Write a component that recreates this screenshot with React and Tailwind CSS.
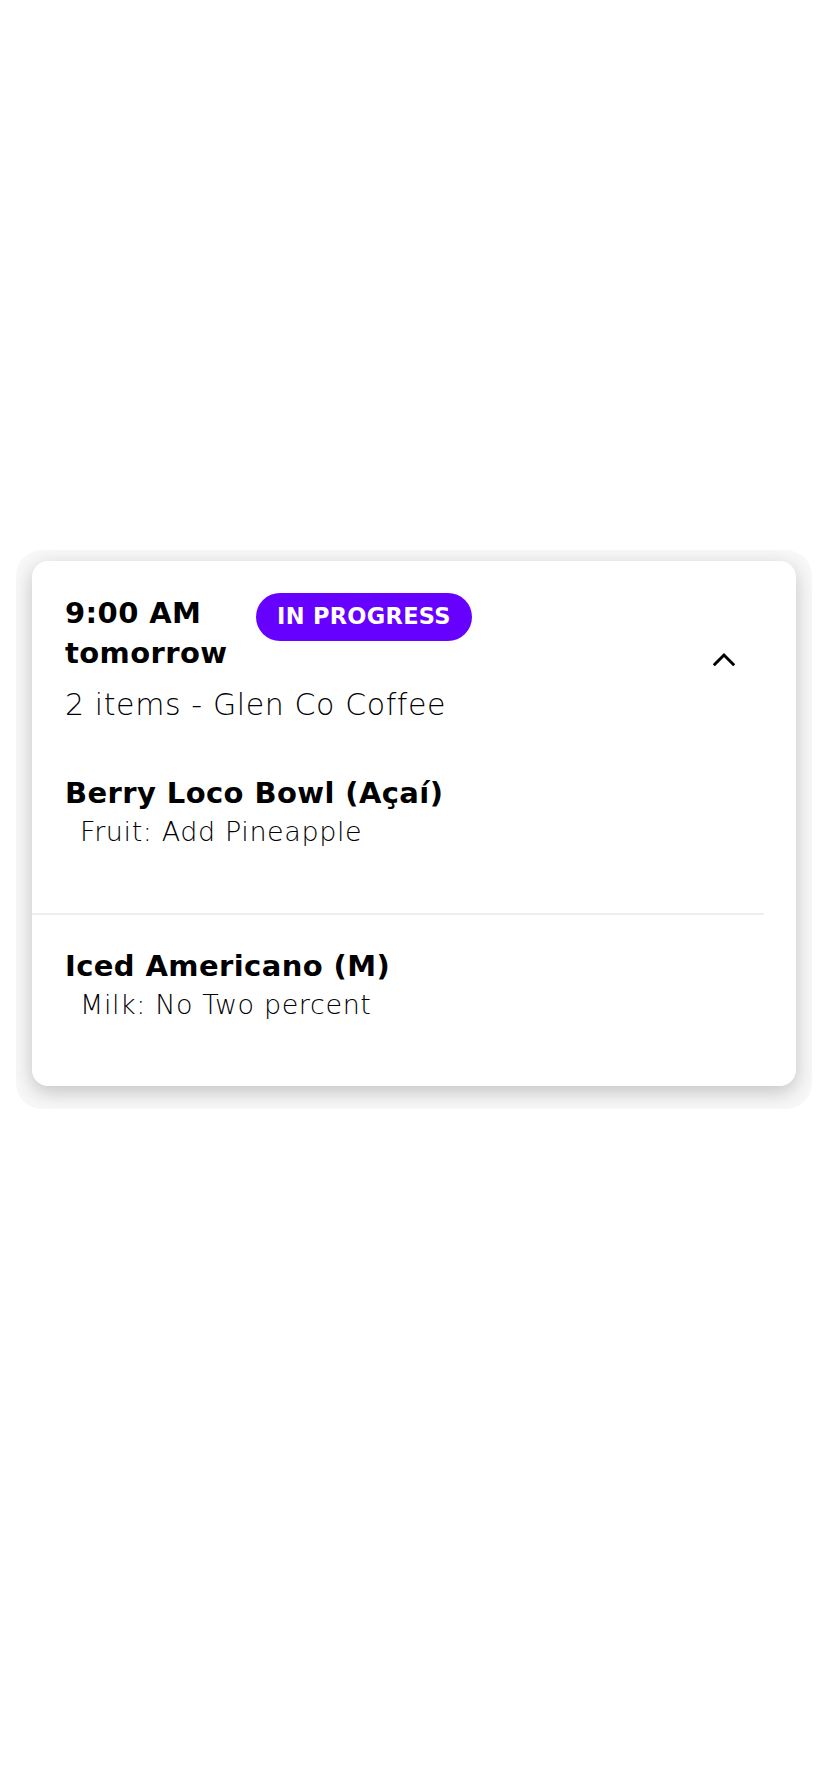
import { useState } from "react";

const ORDER = {
  time: "9:00 AM",
  day: "tomorrow",
  status: "IN PROGRESS",
  summary: "2 items - Glen Co Coffee",
  items: [
    { name: "Berry Loco Bowl (Açaí)", option: "Fruit: Add Pineapple" },
    { name: "Iced Americano (M)", option: "Milk: No Two percent" },
  ],
};

function ChevronUp() {
  return (
    <svg width="22" height="14" viewBox="0 0 22 14" fill="none" className="block">
      <polyline
        points="1.8,12.2 11,3 20.2,12.2"
        stroke="#000"
        strokeWidth="3"
        strokeLinecap="square"
        strokeLinejoin="miter"
      />
    </svg>
  );
}

export default function App() {
  const [open, setOpen] = useState(true);

  return (
    <div
      className="min-h-[1792px] bg-white pt-[550px]"
      style={{ fontFamily: '"DejaVu Sans", "Liberation Sans", sans-serif' }}
    >
      {/* clipped shadow halo behind the card */}
      <div className="mx-[16px] overflow-hidden rounded-[26px] bg-[#f8f8f8] px-[16px] pt-[11px] pb-[23px]">
        <div className="overflow-hidden rounded-2xl bg-white shadow-[0_6px_20px_rgba(0,0,0,0.22)]">
          {/* Header */}
          <div className="flex items-center justify-between pl-[33px] pr-[61px] pt-[32px] pb-[17px]">
            <div>
              <div className="flex items-start">
                <div className="w-[191px] text-[29px] font-bold leading-[40px] tracking-[0.4px] text-black">
                  <div>{ORDER.time}</div>
                  <div>{ORDER.day}</div>
                </div>
                <span className="flex h-[48px] items-center rounded-full bg-[#6600ff] px-[21px] text-[22.5px] font-bold tracking-[0.3px] text-white">
                  {ORDER.status}
                </span>
              </div>
              <div className="mt-[12px] text-[30px] font-extralight leading-[40px] tracking-[0.6px] text-black">
                {ORDER.summary}
              </div>
            </div>
            <button onClick={() => setOpen(!open)} className="p-0">
              <ChevronUp />
            </button>
          </div>

          {/* Items */}
          {open &&
            ORDER.items.map((item, i) => (
              <div key={item.name}>
                {i > 0 && <div className="mr-[32px] h-[2px] bg-[#eeeeee]" />}
                <div className="pl-[33px] pt-[33px] pb-[61px]">
                  <div className="text-[29px] font-bold leading-[37px] tracking-[0.4px] text-black">
                    {item.name}
                  </div>
                  <div className="pl-[15px] text-[27px] font-extralight leading-[40px] tracking-[0.6px] text-black">
                    {item.option}
                  </div>
                </div>
              </div>
            ))}
        </div>
      </div>
    </div>
  );
}
